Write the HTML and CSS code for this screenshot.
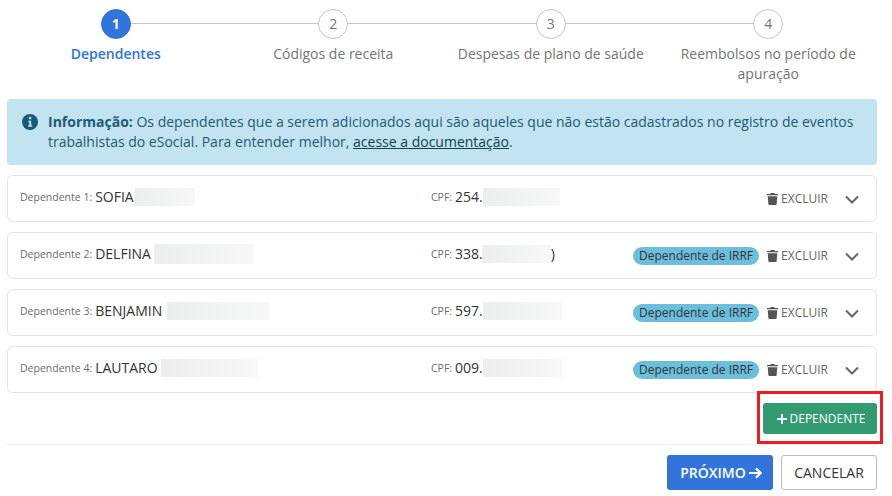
FILE: index.html
```html
<!DOCTYPE html>
<html lang="pt-BR">
<head>
    <meta charset="UTF-8">
    <meta name="viewport" content="width=device-width, initial-scale=1.0">
    <title>Dependentes</title>
    <link rel="stylesheet" href="styles.css">
</head>
<body>
    <div class="container">
        <div class="stepper">
            <div class="step active">
                <div class="step-circle">1</div>
                <div class="step-label">Dependentes</div>
            </div>
            <div class="step">
                <div class="step-circle">2</div>
                <div class="step-label">Códigos de receita</div>
            </div>
            <div class="step">
                <div class="step-circle">3</div>
                <div class="step-label">Despesas de plano de saúde</div>
            </div>
            <div class="step">
                <div class="step-circle">4</div>
                <div class="step-label">Reembolsos no período de apuração</div>
            </div>
        </div>

        <div class="alert">
            <svg class="alert-icon" viewBox="0 0 16 16">
                <circle cx="8" cy="8" r="8" fill="#1b5a75"/>
                <rect x="6.9" y="3" width="2.4" height="2.3" rx="0.6" fill="#c2e3f0"/>
                <path d="M6.2 6.7h3v4.6h1v1.4H6.2v-1.4h1v-3.2h-1z" fill="#c2e3f0"/>
            </svg>
            <p><strong>Informação:</strong> Os dependentes que a serem adicionados aqui são aqueles que não estão cadastrados no registro de eventos trabalhistas do eSocial. Para entender melhor, <a href="#">acesse a documentação</a>.</p>
        </div>

        <div class="list">
            <div class="card">
                <div class="card-name"><span class="small">Dependente 1:</span> <span class="value">SOFIA</span><span class="blur blur-1"></span></div>
                <div class="card-cpf"><span class="small">CPF:</span> <span class="value">254.</span><span class="blur blur-2"></span></div>
                <div class="card-actions">
                    <span class="delete">
                        <svg class="trash" viewBox="0 0 12 13"><path d="M4 0h4l.5 1H12v1.5H0V1h3.500zM.8 3.500h10.400l-.7 8.600a1 1 0 0 1-1 .9H2.500a1 1 0 0 1-1-.9z" fill="#555"/></svg>
                        EXCLUIR
                    </span>
                    <svg class="chevron" viewBox="0 0 14 9"><path d="M1 1.500l6 6 6-6" fill="none" stroke="#666" stroke-width="2"/></svg>
                </div>
            </div>
            <div class="card">
                <div class="card-name"><span class="small">Dependente 2:</span> <span class="value">DELFINA</span><span class="blur blur-3"></span></div>
                <div class="card-cpf"><span class="small">CPF:</span> <span class="value">338.</span><span class="blur blur-4"></span><span class="value">)</span></div>
                <div class="card-actions">
                    <span class="badge">Dependente de IRRF</span>
                    <span class="delete">
                        <svg class="trash" viewBox="0 0 12 13"><path d="M4 0h4l.5 1H12v1.5H0V1h3.500zM.8 3.500h10.400l-.7 8.600a1 1 0 0 1-1 .9H2.500a1 1 0 0 1-1-.9z" fill="#555"/></svg>
                        EXCLUIR
                    </span>
                    <svg class="chevron" viewBox="0 0 14 9"><path d="M1 1.500l6 6 6-6" fill="none" stroke="#666" stroke-width="2"/></svg>
                </div>
            </div>
            <div class="card">
                <div class="card-name"><span class="small">Dependente 3:</span> <span class="value">BENJAMIN</span><span class="blur blur-5"></span></div>
                <div class="card-cpf"><span class="small">CPF:</span> <span class="value">597.</span><span class="blur blur-6"></span></div>
                <div class="card-actions">
                    <span class="badge">Dependente de IRRF</span>
                    <span class="delete">
                        <svg class="trash" viewBox="0 0 12 13"><path d="M4 0h4l.5 1H12v1.5H0V1h3.500zM.8 3.500h10.400l-.7 8.600a1 1 0 0 1-1 .9H2.500a1 1 0 0 1-1-.9z" fill="#555"/></svg>
                        EXCLUIR
                    </span>
                    <svg class="chevron" viewBox="0 0 14 9"><path d="M1 1.500l6 6 6-6" fill="none" stroke="#666" stroke-width="2"/></svg>
                </div>
            </div>
            <div class="card">
                <div class="card-name"><span class="small">Dependente 4:</span> <span class="value">LAUTARO</span><span class="blur blur-7"></span></div>
                <div class="card-cpf"><span class="small">CPF:</span> <span class="value">009.</span><span class="blur blur-6"></span></div>
                <div class="card-actions">
                    <span class="badge">Dependente de IRRF</span>
                    <span class="delete">
                        <svg class="trash" viewBox="0 0 12 13"><path d="M4 0h4l.5 1H12v1.5H0V1h3.500zM.8 3.500h10.400l-.7 8.600a1 1 0 0 1-1 .9H2.500a1 1 0 0 1-1-.9z" fill="#555"/></svg>
                        EXCLUIR
                    </span>
                    <svg class="chevron" viewBox="0 0 14 9"><path d="M1 1.500l6 6 6-6" fill="none" stroke="#666" stroke-width="2"/></svg>
                </div>
            </div>
        </div>

        <div class="add-row">
            <button class="button green">
                <svg class="plus" viewBox="0 0 10 10"><path d="M5 0v10M0 5h10" stroke="#fff" stroke-width="2"/></svg>
                DEPENDENTE
            </button>
            <div class="highlight"></div>
        </div>

        <div class="footer">
            <button class="button blue">
                PRÓXIMO
                <svg class="arrow" viewBox="0 0 14 12"><path d="M0 6h12M7.500 1l5 5-5 5" fill="none" stroke="#fff" stroke-width="2.400"/></svg>
            </button>
            <button class="button outline">CANCELAR</button>
        </div>
    </div>
</body>
</html>
```

FILE: styles.css
```css
* {
    box-sizing: border-box;
}
html, body {
    height: 100%;
    overflow: hidden;
}
body {
    margin: 0;
    background-color: #fff;
    font-family: "Open Sans", sans-serif;
    font-size: 14px;
    line-height: 20px;
    color: #333;
}
.container {
    padding: 9px 15px 0 7px;
}

/* stepper */
.stepper {
    display: grid;
    grid-template-columns: repeat(4, 1fr);
}
.step {
    position: relative;
    display: flex;
    flex-direction: column;
    align-items: center;
    text-align: center;
    color: #757575;
}
.step:not(:last-child)::before {
    content: "";
    position: absolute;
    top: 14px;
    left: 50%;
    width: 100%;
    height: 1px;
    background-color: #c4c4c4;
}
.step-circle {
    position: relative;
    width: 30px;
    height: 30px;
    border: 1px solid #c4c4c4;
    border-radius: 50%;
    background-color: #fff;
    line-height: 28px;
}
.step-label {
    width: 190px;
    margin-top: 5px;
}
.step.active {
    color: #3273dc;
    font-weight: 600;
}
.step.active .step-circle {
    border-color: #3273dc;
    background-color: #3273dc;
    color: #fff;
    font-weight: 700;
}

/* alert */
.alert {
    display: flex;
    gap: 10px;
    margin-top: 15px;
    padding: 13px 15px;
    border-radius: 4px;
    background-color: #c2e3f0;
    color: #1f5a74;
}
.alert-icon {
    flex: none;
    width: 16px;
    height: 16px;
    margin-top: 2px;
}
.alert p {
    margin: 0;
}
.alert a {
    color: #123f55;
}

/* dependentes */
.list {
    display: flex;
    flex-direction: column;
    gap: 10px;
    margin-top: 10px;
}
.card {
    display: flex;
    align-items: center;
    height: 47px;
    padding: 0 17px 0 12px;
    border: 1px solid #e4e4e4;
    border-radius: 6px;
}
.card-name {
    display: flex;
    align-items: center;
    width: 411px;
    margin-top: -4px;
}
.card-cpf {
    display: flex;
    align-items: center;
    margin-top: -4px;
}
.small {
    margin-right: 3px;
    font-size: 10.5px;
    color: #6b6b6b;
}
.value {
    color: #333;
}
.blur {
    height: 18px;
    background: linear-gradient(90deg, #eceeed, #f3f4f4 60%, #f8f8f8);
}
.blur-1 { width: 60px; margin-left: 1px; }
.blur-2 { width: 77px; }
.blur-3 { width: 100px; height: 20px; margin-left: 3px; }
.blur-4 { width: 69px; margin-left: -1px; }
.blur-5 { width: 103px; margin-left: 5px; }
.blur-6 { width: 79px; }
.blur-7 { width: 97px; margin-left: 3px; }
.card-actions {
    display: flex;
    align-items: center;
    margin-left: auto;
}
.badge {
    height: 18px;
    margin-right: 8px;
    padding: 0 6px;
    border-radius: 9px;
    background-color: #6bbfdc;
    font-size: 12px;
    line-height: 18px;
    color: #333;
}
.delete {
    display: flex;
    align-items: center;
    gap: 3px;
    font-size: 12px;
    color: #666;
}
.trash {
    width: 11px;
    height: 12px;
}
.chevron {
    width: 14px;
    height: 9px;
    margin-top: 2px;
    margin-left: 17px;
}

/* botoes */
.button {
    display: flex;
    align-items: center;
    justify-content: center;
    border: 0;
    border-radius: 3px;
    font-family: inherit;
    cursor: pointer;
}
.add-row {
    position: relative;
    display: flex;
    justify-content: flex-end;
    margin-top: 10px;
    padding-bottom: 10px;
    border-bottom: 1px solid #f0f0f0;
}
.highlight {
    position: absolute;
    top: -12px;
    right: -6px;
    width: 126px;
    height: 53px;
    border: 3px solid #ed1c24;
}
.green {
    gap: 3px;
    width: 114px;
    height: 31px;
    padding-left: 8px;
    background-color: #339b72;
    font-size: 12px;
    color: #fff;
}
.plus {
    width: 10px;
    height: 10px;
}
.footer {
    display: flex;
    justify-content: flex-end;
    gap: 8px;
    margin-top: 10px;
}
.blue {
    gap: 3px;
    width: 106px;
    height: 35px;
    padding-left: 8px;
    background-color: #3273dc;
    font-size: 14px;
    font-weight: 600;
    color: #fff;
}
.arrow {
    width: 13px;
    height: 12px;
}
.outline {
    width: 96px;
    height: 35px;
    border: 1px solid #bbb;
    background-color: #fff;
    font-size: 14px;
    color: #333;
}
```
